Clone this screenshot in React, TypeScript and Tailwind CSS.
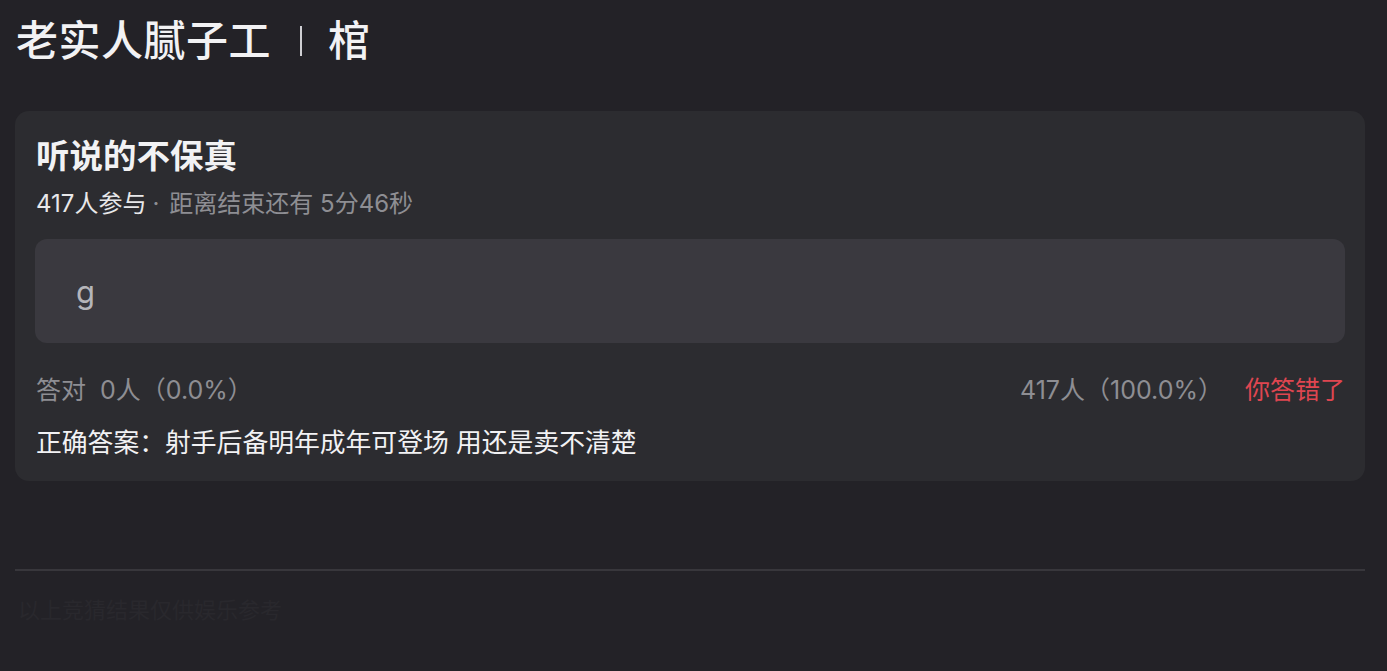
import React from "react";

export default function App() {
  const font = { fontFamily: 'Inter, "Noto Sans CJK SC", "Noto Sans", sans-serif' };
  return (
    <div className="min-h-[671px] w-full bg-[#232227] text-[#f2f2f4]" style={font}>
      <div className="px-[16px] pt-[14px]">
        <div className="flex items-center h-[54px] text-[42px] font-medium leading-none tracking-[0.5px]">
          <span>老实人腻子工</span>
          <span className="ml-[29px] mr-[26px] h-[30px] w-[2px] bg-[#cfcfd3]" />
          <span>棺</span>
        </div>
      </div>
      <div className="ml-[15px] mr-[22px] mt-[43px] rounded-[14px] bg-[#2c2c30] px-[20px] pt-[22px] pb-[21px]">
        <div className="text-[33.5px] font-bold leading-[46px] pl-[1px]">听说的不保真</div>
        <div className="mt-[9px] flex items-center text-[24px] leading-[32px] pl-[1px]">
          <span className="text-[#e8e8ea]">417人参与</span>
          <span className="ml-[6px] mr-[10px] text-[#8e8e93]">·</span>
          <span className="text-[#8e8e93]">距离结束还有 5分46秒</span>
        </div>
        <div className="mt-[19px] flex h-[104px] items-center rounded-[12px] bg-[#3a393f] px-[41px]">
          <span className="text-[31px] text-[#b5b5ba] leading-none">g</span>
        </div>
        <div className="mt-[30px] flex items-center justify-between text-[25px] leading-[34px]">
          <span className="text-[#8e8e93] pl-[1px]">答对&nbsp;&nbsp;0人（0.0%）</span>
          <span className="flex items-center">
            <span className="text-[#8e8e93]">417人（100.0%）</span>
            <span className="ml-[22px] text-[#df4650]">你答错了</span>
          </span>
        </div>
        <div className="mt-[19px] text-[25.8px] leading-[34px] text-[#f2f2f4] pl-[1px]">
          正确答案：射手后备明年成年可登场 用还是卖不清楚
        </div>
      </div>
      <div className="ml-[15px] mr-[22px] mt-[88px] h-[2px] bg-[#38373c]" />
      <div className="px-[18px] pt-[24px] text-[22px] leading-[30px] text-[#29282d]">
        以上竞猜结果仅供娱乐参考
      </div>
    </div>
  );
}
